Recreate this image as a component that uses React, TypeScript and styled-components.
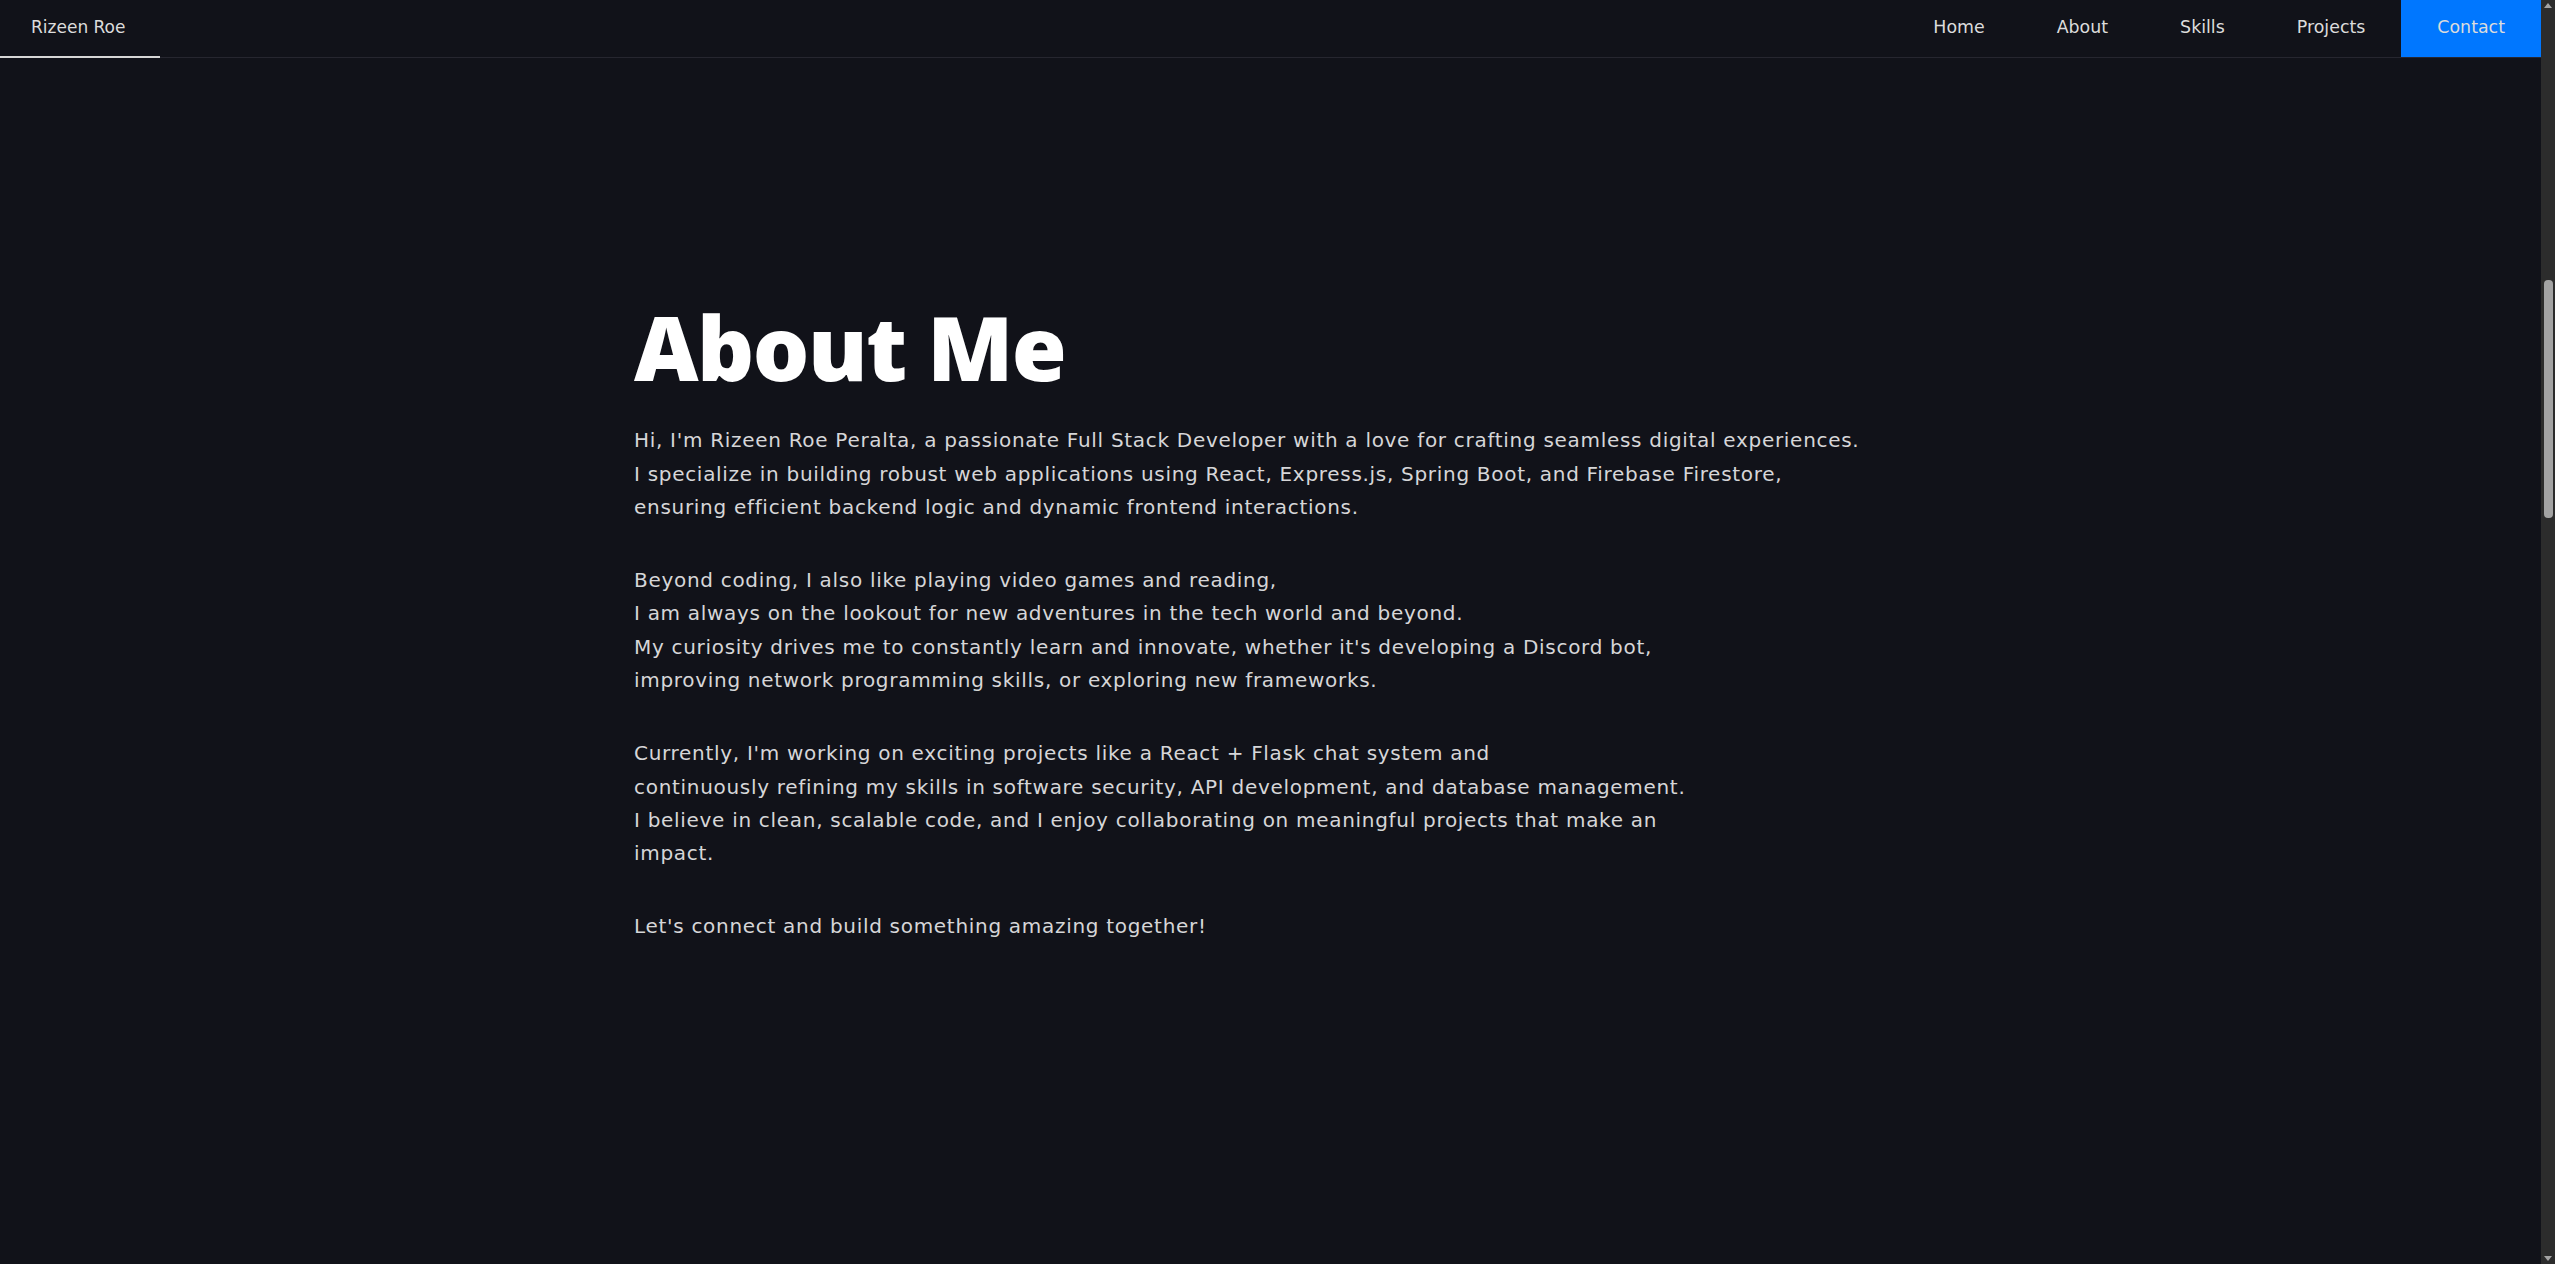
import React from "react";
import styled, { createGlobalStyle } from "styled-components";

const GlobalStyle = createGlobalStyle`
  html, body {
    margin: 0;
    background: #111219;
  }
  body {
    color: #d6d6d8;
    font-family: "DejaVu Sans", "Noto Sans", sans-serif;
  }
  * { box-sizing: border-box; }
`;

const Shell = styled.div`
  display: flex;
  height: 100vh;
  overflow: hidden;
`;

const Main = styled.div`
  flex: 1;
  min-width: 0;
  display: flex;
  flex-direction: column;
  background: #111219;
`;

const NavBar = styled.nav`
  flex: 0 0 58px;
  display: flex;
  justify-content: space-between;
  align-items: stretch;
  background: #111219;
  border-bottom: 1px solid #26262f;
`;

const Brand = styled.a`
  display: flex;
  align-items: center;
  padding: 0 35px 3px 31px;
  margin-bottom: -1px;
  font-size: 17px;
  color: #dcdcdc;
  text-decoration: none;
  border-bottom: 2px solid #d6d6d6;
`;

const Links = styled.div`
  display: flex;
  align-items: stretch;
`;

const NavLink = styled.a<{ $active?: boolean }>`
  display: flex;
  align-items: center;
  padding: 0 36px 3px;
  font-size: 17.4px;
  color: #dcdcdc;
  text-decoration: none;
  background: ${(p) => (p.$active ? "#0077ff" : "transparent")};
`;

const AboutSection = styled.section`
  flex: 1;
  display: flex;
  flex-direction: column;
  justify-content: center;
  padding-bottom: 80px;
`;

const Container = styled.div`
  width: 1273px;
  margin: 0 auto;
`;

const Title = styled.h1`
  margin: 0 0 28px;
  font-family: "Open Sans", "Noto Sans", sans-serif;
  font-size: 89px;
  font-weight: 800;
  line-height: 98px;
  color: #ffffff;
  letter-spacing: -1.5px;
`;

const Paragraph = styled.p`
  margin: 0 0 40px;
  font-size: 20px;
  line-height: 33.3px;
  letter-spacing: 0.7px;
  color: #d6d6d8;
  &:last-child { margin-bottom: 0; }
`;

const ScrollTrack = styled.div`
  flex: 0 0 14px;
  display: flex;
  flex-direction: column;
  align-items: flex-start;
  background: #2c2c2c;
`;

const ScrollArrow = styled.div<{ $down?: boolean }>`
  flex: 0 0 15px;
  width: 14px;
  display: flex;
  align-items: ${(p) => (p.$down ? "flex-end" : "flex-start")};
  justify-content: center;
  padding: 3px 0;
  &::before {
    content: "";
    width: 0;
    height: 0;
    border-left: 4px solid transparent;
    border-right: 4px solid transparent;
    ${(p) =>
      p.$down
        ? "border-top: 5px solid #a3a3a3;"
        : "border-bottom: 5px solid #a3a3a3;"}
  }
`;

const ScrollSpace = styled.div<{ $grow?: boolean; $size?: number }>`
  flex: ${(p) => (p.$grow ? "1" : `0 0 ${p.$size}px`)};
`;

const ScrollThumb = styled.div`
  flex: 0 0 238px;
  width: 9px;
  margin-left: 3px;
  border-radius: 4px;
  background: #a3a3a3;
`;

export default function App() {
  return (
    <>
      <GlobalStyle />
      <Shell>
        <Main>
          <NavBar>
            <Brand href="#home">Rizeen Roe</Brand>
            <Links>
              <NavLink href="#home">Home</NavLink>
              <NavLink href="#about">About</NavLink>
              <NavLink href="#skills">Skills</NavLink>
              <NavLink href="#projects">Projects</NavLink>
              <NavLink href="#contact" $active>
                Contact
              </NavLink>
            </Links>
          </NavBar>

          <AboutSection id="about">
            <Container>
              <Title>About Me</Title>
              <Paragraph>
                Hi, I'm Rizeen Roe Peralta, a passionate Full Stack Developer with a love for crafting seamless digital experiences.
                <br />
                I specialize in building robust web applications using React, Express.js, Spring Boot, and Firebase Firestore,
                <br />
                ensuring efficient backend logic and dynamic frontend interactions.
              </Paragraph>
              <Paragraph>
                Beyond coding, I also like playing video games and reading,
                <br />
                I am always on the lookout for new adventures in the tech world and beyond.
                <br />
                My curiosity drives me to constantly learn and innovate, whether it's developing a Discord bot,
                <br />
                improving network programming skills, or exploring new frameworks.
              </Paragraph>
              <Paragraph>
                Currently, I'm working on exciting projects like a React + Flask chat system and
                <br />
                continuously refining my skills in software security, API development, and database management.
                <br />
                I believe in clean, scalable code, and I enjoy collaborating on meaningful projects that make an
                <br />
                impact.
              </Paragraph>
              <Paragraph>Let's connect and build something amazing together!</Paragraph>
            </Container>
          </AboutSection>
        </Main>

        <ScrollTrack aria-hidden="true">
          <ScrollArrow />
          <ScrollSpace $size={265} />
          <ScrollThumb />
          <ScrollSpace $grow />
          <ScrollArrow $down />
        </ScrollTrack>
      </Shell>
    </>
  );
}
